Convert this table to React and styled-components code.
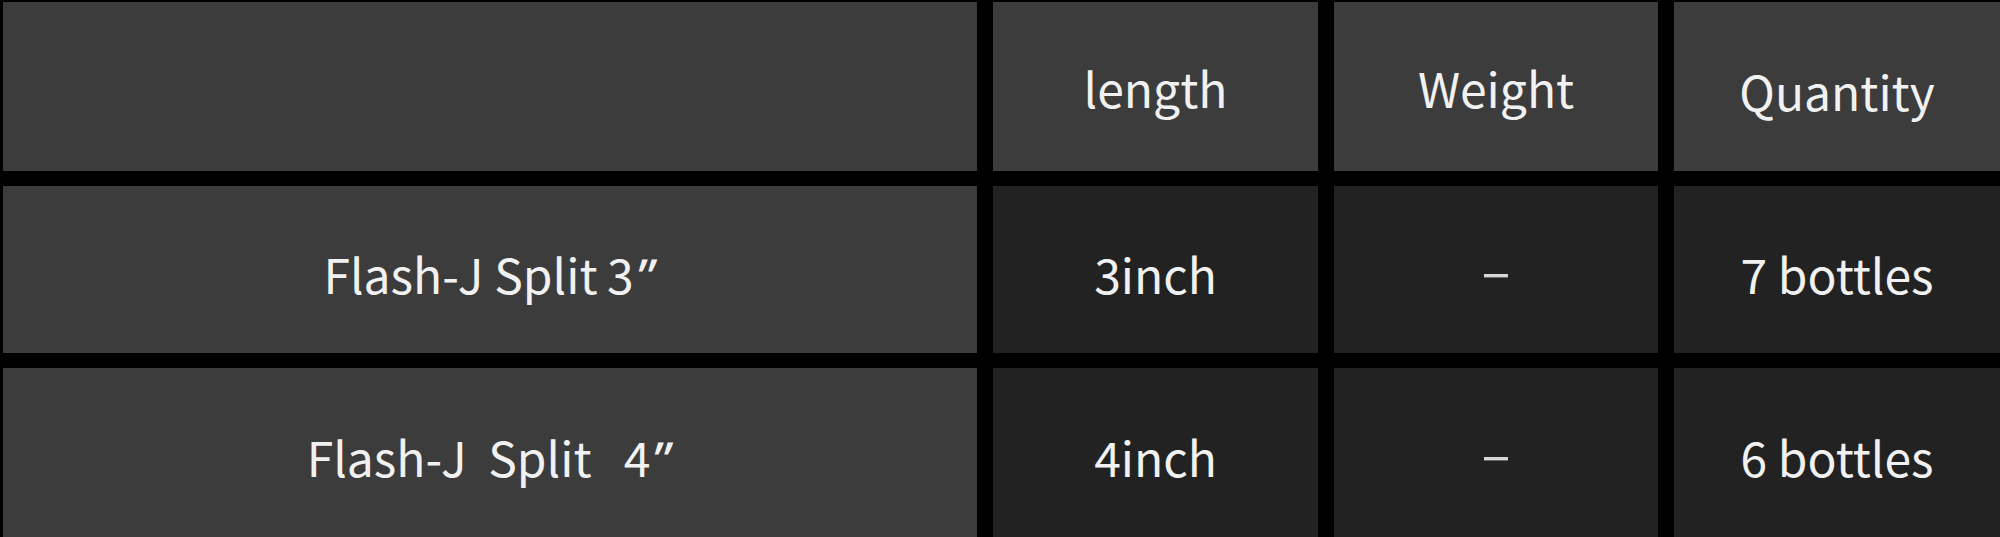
import styled, { createGlobalStyle } from "styled-components";

const GlobalStyle = createGlobalStyle`
    html, body {
        margin: 0;
        padding: 0;
        background: #000;
    }
    body {
        font-family: "Noto Sans CJK KR", "Noto Sans", sans-serif;
    }
`

// spec table: name column + 3 value columns
const Table = styled.div`
    display: grid;
    grid-template-columns: 974px 325px 324px 326px;
    grid-template-rows: 169px 167px 169px;
    column-gap: 16px;
    row-gap: 15px;
    padding: 2px 0 0 3px;
    width: 2000px;
    height: 537px;
    box-sizing: border-box;
    background: #000;
    overflow: hidden;
`

const Cell = styled.div`
    display: flex;
    align-items: center;
    justify-content: center;
    background: ${props => (props.dark ? "#222222" : "#3c3c3c")};
    color: #f1f1f1;
    font-size: 48px;
    font-weight: 400;
    white-space: pre;
    padding-top: ${props => props.shift || 0}px;
    box-sizing: border-box;
`

const Dash = styled.span`
    display: inline-block;
    color: #d8d8d8;
    font-size: 54px;
    padding-bottom: 4px;
`

// the inch mark is a bit heavier and slanted in the original
const Inch = styled.span`
    display: inline-block;
    font-weight: 700;
    font-size: 38px;
    transform: skewX(-12deg);
    margin-left: 1px;
`

const headers = [
    { label: "length", shift: 0 },
    { label: "Weight", shift: 0 },
    { label: "Quantity", shift: 7 },
]

const rows = [
    { name: "Flash-J Split\u20093", inch: "″", length: "3inch", qty: "7 bottles" },
    { name: "Flash-J  Split   4", inch: "″", length: "4inch", qty: "6 bottles" },
]

const App = () => {
    return (
        <>
            <GlobalStyle />
            <Table>
                <Cell />
                {headers.map(h => (
                    <Cell key={h.label} shift={h.shift}>{h.label}</Cell>
                ))}
                {rows.map(r => (
                    <div key={r.name} style={{ display: "contents" }}>
                        <Cell shift={6}>
                            {r.name}<Inch>{r.inch}</Inch>
                        </Cell>
                        <Cell dark shift={6}>{r.length}</Cell>
                        <Cell dark>
                            <Dash>–</Dash>
                        </Cell>
                        <Cell dark shift={6}>{r.qty}</Cell>
                    </div>
                ))}
            </Table>
        </>
    );
};

export default App;
